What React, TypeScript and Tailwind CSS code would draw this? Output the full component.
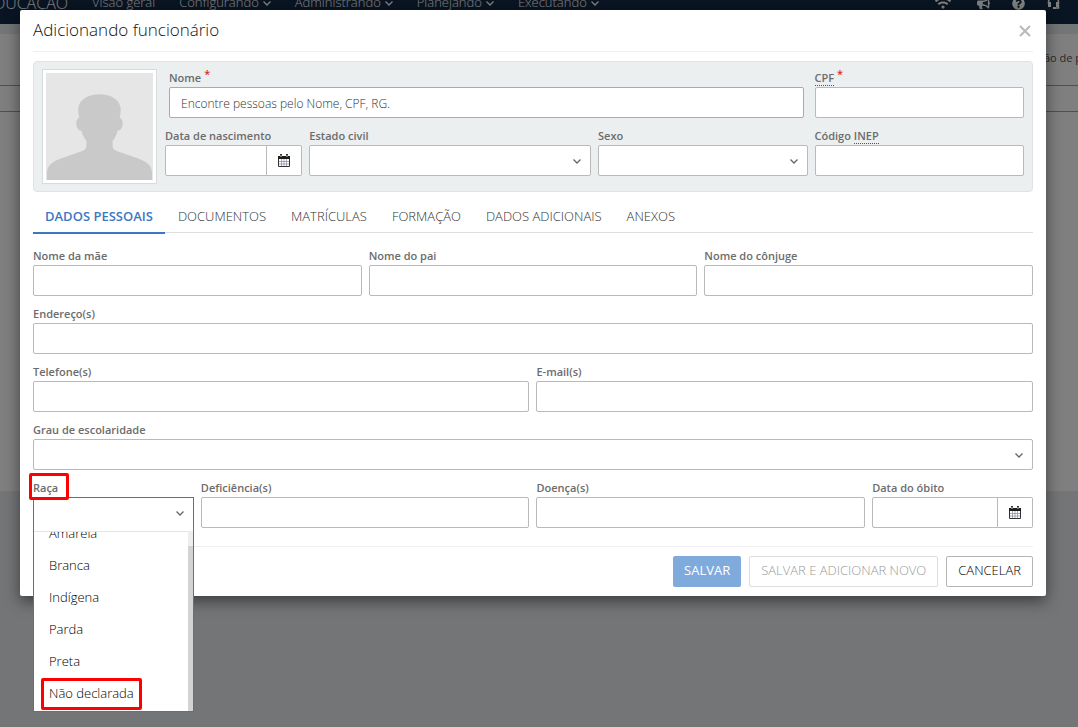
import type { ReactNode } from 'react'
import clsx from 'clsx'
import { FaBullhorn, FaQuestionCircle, FaWifi } from 'react-icons/fa'

const MENU = [
  { label: 'Visão geral', submenu: false },
  { label: 'Configurando', submenu: true },
  { label: 'Administrando', submenu: true },
  { label: 'Planejando', submenu: true },
  { label: 'Executando', submenu: true },
]

const TABS = [
  'DADOS PESSOAIS',
  'DOCUMENTOS',
  'MATRÍCULAS',
  'FORMAÇÃO',
  'DADOS ADICIONAIS',
  'ANEXOS',
]

const RACES = ['Amarela', 'Branca', 'Indígena', 'Parda', 'Preta', 'Não declarada']

const CONTROL =
  'block h-[31px] w-full rounded-xs border border-[#b9b9b9] bg-white px-3 text-xs text-[#555] outline-none'

function Chevron({ className }: { className?: string }) {
  return (
    <svg viewBox="0 0 8 5" className={clsx('h-[5px] w-2 shrink-0', className)} aria-hidden="true">
      <path d="M.5.5 4 4 7.5.5" fill="none" stroke="currentColor" strokeWidth="1.3" />
    </svg>
  )
}

function HeadsetIcon() {
  return (
    <svg viewBox="0 0 13 14" className="h-[14px] w-[13px]" aria-hidden="true">
      <path d="M1.500 8V6a5 5 0 0 1 10 0v2M11.500 9v3H7.500" fill="none" stroke="currentColor" strokeWidth="1.5" />
      <path d="M1 6h3v5H1zM9 6h3v5H9zM6 11h3v2H6z" fill="currentColor" />
    </svg>
  )
}

function CalendarIcon() {
  return (
    <svg viewBox="0 0 12 13" className="h-[13px] w-3" aria-hidden="true">
      <path d="M.5 4.500h11v8H.5z" fill="#fff" stroke="#333" />
      <path d="M3.500 5v7M6 5v7M8.500 5v7M1 7.500h10M1 10h10" fill="none" stroke="#8a8a9a" strokeWidth=".7" />
      <path d="M0 2h12v3H0z" fill="#1c1c1c" />
      <path d="M3 0v3M9 0v3" stroke="#333" strokeWidth="2" />
      <path d="M3 1v2M9 1v2" stroke="#e5d3a8" strokeWidth=".9" />
    </svg>
  )
}

function Avatar() {
  return (
    <div className="shrink-0 self-start border border-[#d9dcdd] bg-white p-[3px]">
      <svg viewBox="0 0 106 106" className="size-[107px]" role="img" aria-label="Foto">
        <path d="M0 0h106v106H0z" fill="#e6e6e6" />
        <path
          d="M1 106V99C1 92 6 88 14 85L31 79C37 77 40 76 40 72V67C37 64 36 60 35 57C32 57 30 54 30 50C30 47 31 45 33 44C32 41 32 38 32 35C33 26 42 21 53 21C64 21 73 26 74 35C74 38 74 41 73 44C75 45 76 47 76 50C76 54 74 57 71 57C70 60 69 64 66 67V72C66 76 69 77 75 79L92 85C100 88 105 92 105 99V106Z"
          fill="#c9c9c9"
        />
      </svg>
    </div>
  )
}

interface FieldProps {
  id: string
  label: ReactNode
  className?: string
  children: ReactNode
}

function Field({ id, label, className, children }: FieldProps) {
  return (
    <div className={className}>
      <label htmlFor={id} className="block h-[18px] text-[11px] leading-[17px] font-semibold whitespace-nowrap text-[#6c6c6c]">
        {label}
      </label>
      {children}
    </div>
  )
}

function Select({ id }: { id: string }) {
  return (
    <div className="relative">
      <select id={id} className={clsx(CONTROL, 'appearance-none')} />
      <Chevron className="pointer-events-none absolute top-[14px] right-[10px] text-[#666]" />
    </div>
  )
}

function DateInput({ id }: { id: string }) {
  return (
    <div className="flex">
      <input id={id} type="text" className={clsx(CONTROL, 'min-w-0 flex-1 rounded-r-none')} />
      <button
        type="button"
        aria-label="Abrir calendário"
        className="flex h-[31px] w-[35px] items-center justify-center rounded-r-xs border border-l-0 border-[#b9b9b9] bg-white"
      >
        <CalendarIcon />
      </button>
    </div>
  )
}

function Required() {
  return <sup className="-top-1 ml-[3px] text-[11px] leading-none text-[#e02b20]">*</sup>
}

function Highlight({ className }: { className?: string }) {
  return <span className={clsx('pointer-events-none absolute z-20 rounded-xs border-3 border-[#f00]', className)} />
}

// Lista aberta: fica sobre o rodapé do modal e ultrapassa a borda dele.
function RaceSelect() {
  return (
    <div className="relative">
      <select
        id="raca"
        className="block h-[34px] w-full appearance-none border border-b-0 border-[#3d78b8] bg-white px-3 text-xs outline-none"
      />
      <Chevron className="pointer-events-none absolute top-[14px] right-[10px] text-[#666]" />
      <div className="absolute inset-x-0 top-full z-10 flex h-[181px] border border-t-0 border-[#3d78b8] bg-white">
        <ul
          role="listbox"
          aria-label="Raça"
          className="flex min-w-0 flex-1 flex-col justify-end overflow-hidden border-t border-[#e4e4e4] pb-px"
        >
          {RACES.map((race) => (
            <li key={race} role="option" aria-selected={false} className="flex h-8 shrink-0 items-center pl-[15px] text-[13px] font-light text-black">
              <span className="relative flex h-full items-center">
                {race}
                {race === 'Não declarada' && <Highlight className="-inset-x-2 inset-y-0" />}
              </span>
            </li>
          ))}
        </ul>
        <div className="w-[5px] bg-[#eee] pt-[15px]">
          <div className="h-full bg-[#d3d3d3]" />
        </div>
      </div>
    </div>
  )
}

function Backdrop() {
  return (
    <>
      <header className="-mt-[18px] flex h-[42px] items-center bg-[#132a47] pr-[18px] text-[13px] font-light text-white">
        <span className="flex w-[68px] justify-end overflow-hidden text-base">EDUCAÇÃO</span>
        <nav className="flex gap-6 pl-6">
          {MENU.map((item) => (
            <a key={item.label} href="#" className="flex items-center gap-1 whitespace-nowrap">
              {item.label}
              {item.submenu && <Chevron />}
            </a>
          ))}
        </nav>
        <div className="ml-auto flex items-center gap-[22px] text-[13px]">
          <FaWifi className="mr-1 text-base" />
          <FaBullhorn />
          <FaQuestionCircle />
          <HeadsetIcon />
        </div>
      </header>
      <main className="pt-[10px]">
        <div className="flex min-h-[457px] flex-col items-end overflow-hidden bg-white pt-4 text-[11px] text-[#555]">
          <p className="w-[34px] whitespace-nowrap">ão de p</p>
          <div className="mt-[18px] h-[27px] w-full border-y border-[#a0a0a0]" />
        </div>
      </main>
    </>
  )
}

export default function App() {
  return (
    <div className="relative flow-root min-h-screen overflow-hidden bg-[#e9ebee] font-['Open_Sans',sans-serif]">
      <Backdrop />
      <div className="absolute inset-0 bg-black/50 pt-[10px] pr-8 pl-5">
        <section role="dialog" aria-labelledby="titulo" className="rounded-xs bg-white px-[13px] pb-[9px] shadow-[0_5px_15px_rgba(0,0,0,0.5)]">
          <header className="flex h-[42px] items-center justify-between border-b border-[#f0f0f0]">
            <h1 id="titulo" className="pb-0.5 text-[17px] font-light text-[#111]">
              Adicionando funcionário
            </h1>
            <button type="button" aria-label="Fechar" className="p-0.5 text-[#bbb]">
              <svg viewBox="0 0 12 12" className="size-3" aria-hidden="true">
                <path d="m1 1 10 10M11 1 1 11" stroke="currentColor" strokeWidth="2.200" />
              </svg>
            </button>
          </header>

          <form>
            <div className="mt-[9px] flex gap-2 rounded-sm border border-[#dfe3e4] bg-[#ebeff0] px-2 py-[7px]">
              <Avatar />
              <div className="grid flex-1 grid-cols-12 content-start gap-x-[7px] gap-y-[9px]">
                <Field id="nome" label={<>Nome<Required /></>} className="col-span-9 px-1">
                  <input
                    id="nome"
                    type="text"
                    placeholder="Encontre pessoas pelo Nome, CPF, RG."
                    className="block h-[31px] w-full rounded-xs border border-[#ea8f8f] bg-white px-[11px] pt-0.5 text-xs font-light outline-none placeholder:text-[#333]"
                  />
                </Field>
                <Field
                  id="cpf"
                  label={<><span className="border-b border-dotted border-[#555]">CPF</span><Required /></>}
                  className="col-span-3"
                >
                  <input id="cpf" type="text" className={CONTROL} />
                </Field>
                <Field id="nascimento" label="Data de nascimento" className="col-span-2">
                  <DateInput id="nascimento" />
                </Field>
                <Field id="estado-civil" label="Estado civil" className="col-span-4">
                  <Select id="estado-civil" />
                </Field>
                <Field id="sexo" label="Sexo" className="col-span-3">
                  <Select id="sexo" />
                </Field>
                <Field
                  id="inep"
                  label={<>Código <span className="border-b border-dotted border-[#555]">INEP</span></>}
                  className="col-span-3"
                >
                  <input id="inep" type="text" className={CONTROL} />
                </Field>
              </div>
            </div>

            <div role="tablist" className="mt-2 flex h-[33px] gap-px border-b border-[#ddd] text-[13px] text-[#333]">
              {TABS.map((tab, i) => (
                <button
                  key={tab}
                  type="button"
                  role="tab"
                  aria-selected={i === 0}
                  className={clsx(
                    'h-[34px] border-b-2 px-3 pt-0.5 whitespace-nowrap',
                    i === 0 ? 'border-[#3d78c3] font-semibold text-[#3d78c3]' : 'border-transparent font-light',
                  )}
                >
                  {tab}
                </button>
              ))}
            </div>

            <div className="mt-[14px] grid grid-cols-12 gap-x-[7px] gap-y-[9px]">
              <Field id="mae" label="Nome da mãe" className="col-span-4">
                <input id="mae" type="text" className={CONTROL} />
              </Field>
              <Field id="pai" label="Nome do pai" className="col-span-4">
                <input id="pai" type="text" className={CONTROL} />
              </Field>
              <Field id="conjuge" label="Nome do cônjuge" className="col-span-4">
                <input id="conjuge" type="text" className={CONTROL} />
              </Field>
              <Field id="endereco" label="Endereço(s)" className="col-span-12">
                <input id="endereco" type="text" className={CONTROL} />
              </Field>
              <Field id="telefone" label="Telefone(s)" className="col-span-6">
                <input id="telefone" type="text" className={CONTROL} />
              </Field>
              <Field id="email" label="E-mail(s)" className="col-span-6">
                <input id="email" type="text" className={CONTROL} />
              </Field>
              <Field id="escolaridade" label="Grau de escolaridade" className="col-span-12">
                <Select id="escolaridade" />
              </Field>
              <Field
                id="raca"
                label={
                  <span className="relative inline-block">
                    Raça
                    <Highlight className="-top-1.5 -right-[11px] -bottom-1 -left-1" />
                  </span>
                }
                className="col-span-2"
              >
                <RaceSelect />
              </Field>
              <Field id="deficiencia" label="Deficiência(s)" className="col-span-4">
                <input id="deficiencia" type="text" className={CONTROL} />
              </Field>
              <Field id="doenca" label="Doença(s)" className="col-span-4">
                <input id="doenca" type="text" className={CONTROL} />
              </Field>
              <Field id="obito" label="Data do óbito" className="col-span-2">
                <DateInput id="obito" />
              </Field>
            </div>

            <footer className="mt-[15px] flex justify-end gap-2 border-t border-[#f0f0f4] pt-[9px] text-[13px]">
              <button type="submit" className="h-[31px] rounded-xs bg-[#7faadc] px-[11px] pb-0.5 text-white">
                SALVAR
              </button>
              <button type="button" disabled className="h-[31px] rounded-xs border border-[#ddd] bg-white px-[11px] pb-0.5 font-light text-[#999]">
                SALVAR E ADICIONAR NOVO
              </button>
              <button type="button" className="h-[31px] rounded-xs border border-[#b5b5b5] bg-white px-[11px] pb-0.5 font-light text-black">
                CANCELAR
              </button>
            </footer>
          </form>
        </section>
      </div>
    </div>
  )
}
